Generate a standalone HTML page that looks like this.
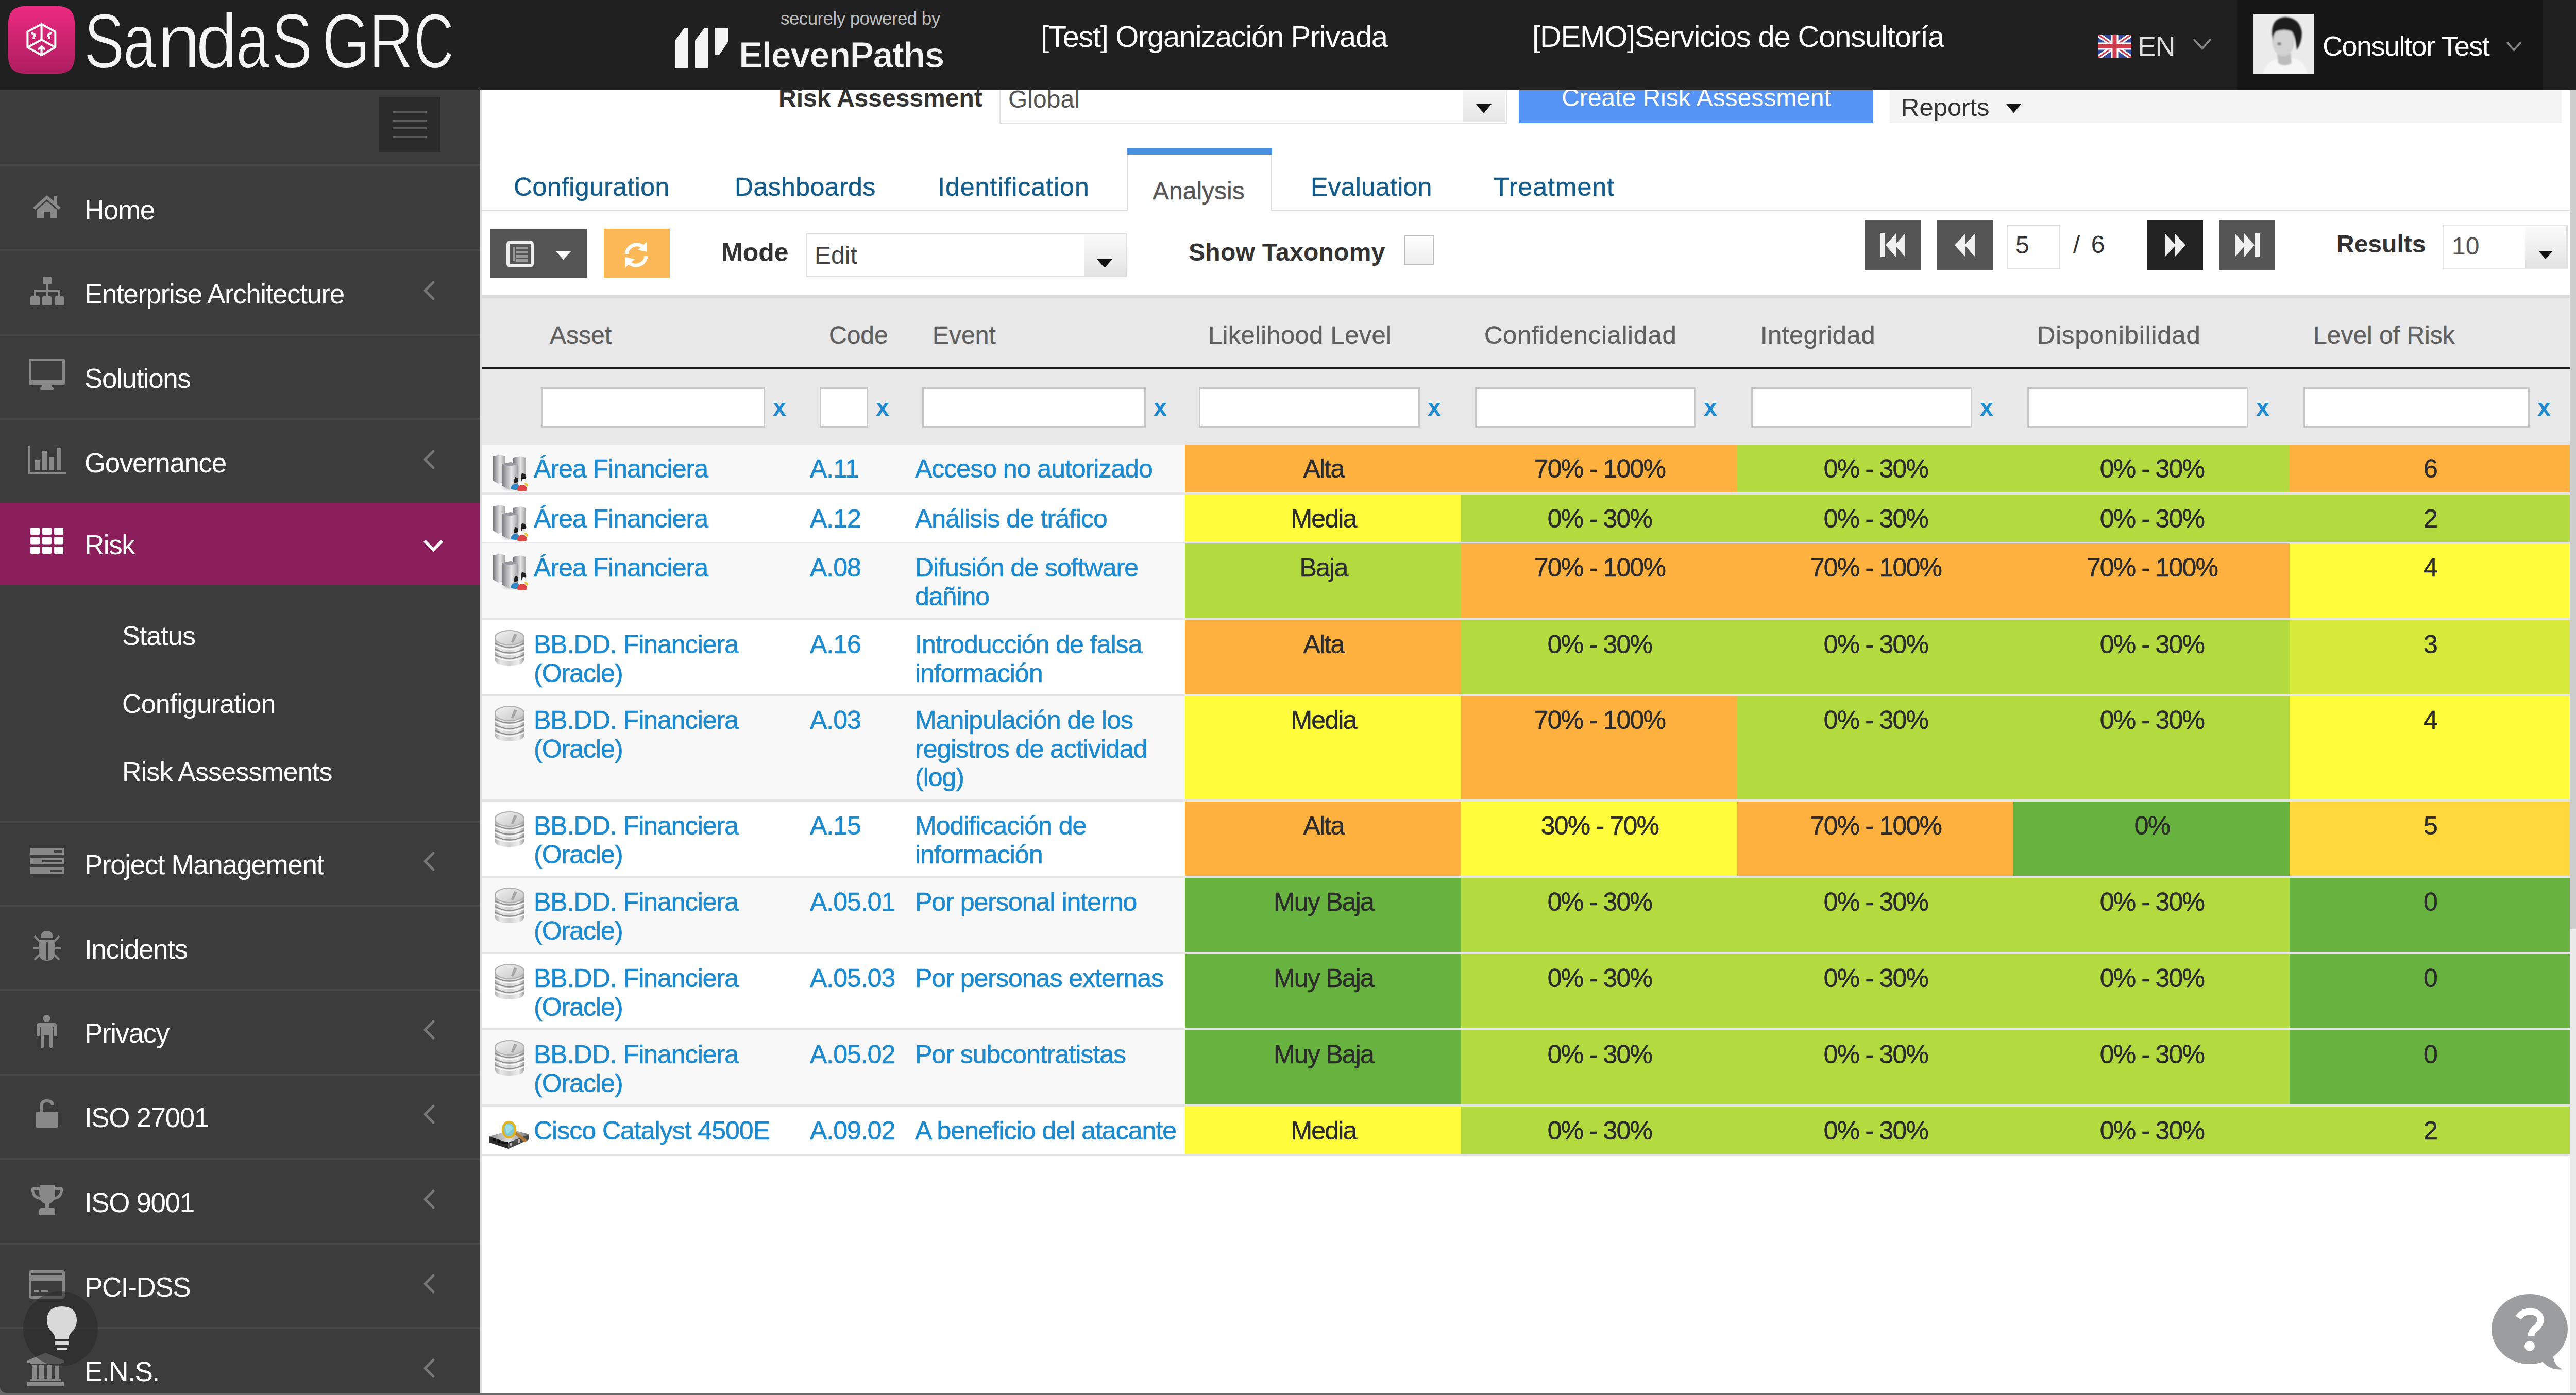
<!DOCTYPE html>
<html><head><meta charset="utf-8"><style>
html,body{margin:0;padding:0;}
body{width:5032px;height:2708px;overflow:hidden;position:relative;background:#6a6a6a;font-family:"Liberation Sans", sans-serif;}
#win{position:absolute;left:0;top:0;width:5032px;height:2704px;overflow:hidden;border-radius:0 0 12px 12px;}
.t{position:absolute;white-space:nowrap;font-family:"Liberation Sans", sans-serif;}
.r{position:absolute;display:block;}
</style></head><body><div id="win">
<div class="r" style="left:0px;top:175px;width:932px;height:2533px;background:#3c3c3c;"></div>
<div class="r" style="left:736px;top:188px;width:119px;height:107px;background:#2b2b2b;"></div>
<div class="r" style="left:763px;top:215.7px;width:65px;height:4.0px;background:#5a5a5a;"></div>
<div class="r" style="left:763px;top:231.7px;width:65px;height:4.0px;background:#5a5a5a;"></div>
<div class="r" style="left:763px;top:247.3px;width:65px;height:4.0px;background:#5a5a5a;"></div>
<div class="r" style="left:763px;top:263.7px;width:65px;height:4.0px;background:#5a5a5a;"></div>
<div class="r" style="left:0px;top:319px;width:932px;height:4px;background:#474747;"></div>
<div class="r" style="left:0px;top:483.5px;width:932px;height:4.0px;background:#474747;"></div>
<div class="r" style="left:0px;top:647.5px;width:932px;height:4.0px;background:#474747;"></div>
<div class="r" style="left:0px;top:811px;width:932px;height:4px;background:#474747;"></div>
<div class="r" style="left:0px;top:976px;width:932px;height:160px;background:#8a1f5b;"></div>
<div class="r" style="left:0px;top:1592.5px;width:932px;height:4.0px;background:#474747;"></div>
<div class="r" style="left:0px;top:1756px;width:932px;height:4px;background:#474747;"></div>
<div class="r" style="left:0px;top:1920px;width:932px;height:4px;background:#474747;"></div>
<div class="r" style="left:0px;top:2084px;width:932px;height:4px;background:#474747;"></div>
<div class="r" style="left:0px;top:2248px;width:932px;height:4px;background:#474747;"></div>
<div class="r" style="left:0px;top:2412px;width:932px;height:4px;background:#474747;"></div>
<div class="r" style="left:0px;top:2576px;width:932px;height:4px;background:#474747;"></div>
<div class="t" style="left:164px;top:380.64px;font-size:53px;line-height:53px;color:#ffffff;letter-spacing:-1.4px;">Home</div>
<div class="t" style="left:164px;top:544.14px;font-size:53px;line-height:53px;color:#ffffff;letter-spacing:-1.4px;">Enterprise Architecture</div>
<svg class="r" style="left:820px;top:544px;" width="26" height="40" viewBox="0 0 26 40"><path d="M21 4 L5 20 L21 36" fill="none" stroke="#777" stroke-width="5" stroke-linecap="round" stroke-linejoin="round"/></svg>
<div class="t" style="left:164px;top:708.14px;font-size:53px;line-height:53px;color:#ffffff;letter-spacing:-1.4px;">Solutions</div>
<div class="t" style="left:164px;top:872.14px;font-size:53px;line-height:53px;color:#ffffff;letter-spacing:-1.4px;">Governance</div>
<svg class="r" style="left:820px;top:872px;" width="26" height="40" viewBox="0 0 26 40"><path d="M21 4 L5 20 L21 36" fill="none" stroke="#777" stroke-width="5" stroke-linecap="round" stroke-linejoin="round"/></svg>
<div class="t" style="left:164px;top:1031.14px;font-size:53px;line-height:53px;color:#ffffff;letter-spacing:-1.4px;">Risk</div>
<svg class="r" style="left:821px;top:1047px;" width="40" height="25" viewBox="0 0 40 25"><path d="M3 3 L20 20 L37 3" fill="none" stroke="#fff" stroke-width="6"/></svg>
<div class="t" style="left:164px;top:1651.64px;font-size:53px;line-height:53px;color:#ffffff;letter-spacing:-1.4px;">Project Management</div>
<svg class="r" style="left:820px;top:1651.5px;" width="26" height="40" viewBox="0 0 26 40"><path d="M21 4 L5 20 L21 36" fill="none" stroke="#777" stroke-width="5" stroke-linecap="round" stroke-linejoin="round"/></svg>
<div class="t" style="left:164px;top:1815.64px;font-size:53px;line-height:53px;color:#ffffff;letter-spacing:-1.4px;">Incidents</div>
<div class="t" style="left:164px;top:1979.14px;font-size:53px;line-height:53px;color:#ffffff;letter-spacing:-1.4px;">Privacy</div>
<svg class="r" style="left:820px;top:1979px;" width="26" height="40" viewBox="0 0 26 40"><path d="M21 4 L5 20 L21 36" fill="none" stroke="#777" stroke-width="5" stroke-linecap="round" stroke-linejoin="round"/></svg>
<div class="t" style="left:164px;top:2143.14px;font-size:53px;line-height:53px;color:#ffffff;letter-spacing:-1.4px;">ISO 27001</div>
<svg class="r" style="left:820px;top:2143px;" width="26" height="40" viewBox="0 0 26 40"><path d="M21 4 L5 20 L21 36" fill="none" stroke="#777" stroke-width="5" stroke-linecap="round" stroke-linejoin="round"/></svg>
<div class="t" style="left:164px;top:2308.14px;font-size:53px;line-height:53px;color:#ffffff;letter-spacing:-1.4px;">ISO 9001</div>
<svg class="r" style="left:820px;top:2308px;" width="26" height="40" viewBox="0 0 26 40"><path d="M21 4 L5 20 L21 36" fill="none" stroke="#777" stroke-width="5" stroke-linecap="round" stroke-linejoin="round"/></svg>
<div class="t" style="left:164px;top:2472.14px;font-size:53px;line-height:53px;color:#ffffff;letter-spacing:-1.4px;">PCI-DSS</div>
<svg class="r" style="left:820px;top:2472px;" width="26" height="40" viewBox="0 0 26 40"><path d="M21 4 L5 20 L21 36" fill="none" stroke="#777" stroke-width="5" stroke-linecap="round" stroke-linejoin="round"/></svg>
<div class="t" style="left:164px;top:2636.14px;font-size:53px;line-height:53px;color:#ffffff;letter-spacing:-1.4px;">E.N.S.</div>
<svg class="r" style="left:820px;top:2636px;" width="26" height="40" viewBox="0 0 26 40"><path d="M21 4 L5 20 L21 36" fill="none" stroke="#777" stroke-width="5" stroke-linecap="round" stroke-linejoin="round"/></svg>
<svg class="r" style="left:62px;top:377px;" width="58" height="48" viewBox="0 0 58 48"><path d="M29 2 L2 26 L6 30 L29 10 L52 30 L56 26 L48 19 L48 4 L42 4 L42 13 Z" fill="#888888"/><path d="M10 30 L29 14 L48 30 L48 47 L35 47 L35 34 L23 34 L23 47 L10 47 Z" fill="#888888"/></svg>
<svg class="r" style="left:59px;top:537px;" width="65" height="56" viewBox="0 0 65 56"><g fill="#888888"><rect x="24" y="0" width="17" height="15" rx="2"/><rect x="0" y="38" width="18" height="18" rx="3"/><rect x="23" y="38" width="18" height="18" rx="3"/><rect x="47" y="38" width="18" height="18" rx="3"/><rect x="31" y="14" width="4" height="24"/><rect x="7" y="25" width="51" height="4"/><rect x="7" y="25" width="4" height="13"/><rect x="54" y="25" width="4" height="13"/></g></svg>
<svg class="r" style="left:56px;top:696px;" width="70" height="61" viewBox="0 0 70 61"><g fill="#888888"><path d="M4 0 H66 Q70 0 70 4 V48 Q70 52 66 52 H4 Q0 52 0 48 V4 Q0 0 4 0 Z M5 5 V42 H65 V5 Z" fill-rule="evenodd"/><rect x="26" y="52" width="18" height="5"/><rect x="22" y="56" width="26" height="5" rx="2"/></g></svg>
<svg class="r" style="left:54px;top:865px;" width="74" height="55" viewBox="0 0 74 55"><g fill="#888888"><rect x="0" y="0" width="4" height="55"/><rect x="0" y="51" width="74" height="4"/><rect x="14" y="28" width="9" height="20"/><rect x="28" y="10" width="9" height="38"/><rect x="42" y="22" width="9" height="26"/><rect x="56" y="4" width="9" height="44"/></g></svg>
<svg class="r" style="left:59px;top:1024px;" width="65" height="52" viewBox="0 0 65 52"><rect x="0" y="0.0" width="18" height="14" rx="2" fill="#fff"/><rect x="23" y="0.0" width="18" height="14" rx="2" fill="#fff"/><rect x="46" y="0.0" width="18" height="14" rx="2" fill="#fff"/><rect x="0" y="18.5" width="18" height="14" rx="2" fill="#fff"/><rect x="23" y="18.5" width="18" height="14" rx="2" fill="#fff"/><rect x="46" y="18.5" width="18" height="14" rx="2" fill="#fff"/><rect x="0" y="37.0" width="18" height="14" rx="2" fill="#fff"/><rect x="23" y="37.0" width="18" height="14" rx="2" fill="#fff"/><rect x="46" y="37.0" width="18" height="14" rx="2" fill="#fff"/></svg>
<svg class="r" style="left:59px;top:1646px;" width="65" height="51" viewBox="0 0 65 51"><g fill="#888888"><rect x="0" y="0" width="65" height="13"/><rect x="0" y="19" width="65" height="13"/><rect x="0" y="38" width="65" height="13"/></g><g fill="#3d3d3d"><rect x="46" y="4" width="15" height="5"/><rect x="23" y="23" width="38" height="5"/><rect x="38" y="42" width="23" height="5"/></g></svg>
<svg class="r" style="left:62px;top:1807px;" width="58" height="58" viewBox="0 0 58 58"><g fill="#888888"><path d="M17 14 Q17 0 29 0 Q41 0 41 14 Z"/><path d="M13 18 H45 V40 Q45 58 29 58 Q13 58 13 40 Z"/></g><rect x="27" y="22" width="4" height="34" fill="#3d3d3d"/><g stroke="#888888" stroke-width="4"><path d="M2 34 H13 M45 34 H56 M5 10 L14 20 M53 10 L44 20 M5 56 L15 46 M53 56 L43 46"/></g></svg>
<svg class="r" style="left:71px;top:1970px;" width="39" height="64" viewBox="0 0 39 64"><g fill="#888888"><circle cx="19.5" cy="7" r="7"/><path d="M5 16 H34 Q39 16 39 21 V40 Q39 42 36 42 Q33 42 33 40 V24 H31 V62 Q31 64 28 64 Q25 64 25 62 V40 H14 V62 Q14 64 11 64 Q8 64 8 62 V24 H6 V40 Q6 42 3 42 Q0 42 0 40 V21 Q0 16 5 16 Z"/></g></svg>
<svg class="r" style="left:69px;top:2132px;" width="44" height="57" viewBox="0 0 44 57"><g fill="#888888"><path d="M4 26 H40 Q44 26 44 30 V53 Q44 57 40 57 H4 Q0 57 0 53 V30 Q0 26 4 26 Z"/><path d="M8 26 V16 Q8 2 22 2 Q36 2 36 14 L30 14 Q30 8 22 8 Q14 8 14 16 V26 Z"/></g></svg>
<svg class="r" style="left:61px;top:2301px;" width="61" height="57" viewBox="0 0 61 57"><g fill="#888888"><path d="M16 0 H45 V4 H58 Q61 4 61 8 Q61 26 44 28 Q40 34 34 36 V44 H42 Q46 44 46 50 V57 H15 V50 Q15 44 19 44 H27 V36 Q21 34 17 28 Q0 26 0 8 Q0 4 3 4 H16 Z M5 9 Q6 20 16 23 Q15 16 15 9 Z M56 9 H46 Q46 16 45 23 Q55 20 56 9 Z" fill-rule="evenodd"/></g></svg>
<svg class="r" style="left:56px;top:2466px;" width="70" height="55" viewBox="0 0 70 55"><g fill="#888888"><path d="M5 0 H65 Q70 0 70 5 V50 Q70 55 65 55 H5 Q0 55 0 50 V5 Q0 0 5 0 Z M5 20 V49 Q5 50 6 50 H64 Q65 50 65 49 V20 Z M5 6 V10 H65 V6 Q65 5 64 5 H6 Q5 5 5 6 Z" fill-rule="evenodd"/><rect x="10" y="38" width="10" height="4"/><rect x="24" y="38" width="14" height="4"/></g></svg>
<svg class="r" style="left:53px;top:2626px;" width="71" height="65" viewBox="0 0 71 65"><g fill="#888888"><path d="M35.5 0 L71 15 V20 H0 V15 Z"/><rect x="5" y="20" width="61" height="2"/><rect x="9" y="24" width="9" height="26"/><rect x="23" y="24" width="9" height="26"/><rect x="39" y="24" width="9" height="26"/><rect x="53" y="24" width="9" height="26"/><rect x="5" y="50" width="61" height="5"/><rect x="0" y="57" width="71" height="8"/></g></svg>
<div class="t" style="left:237px;top:1207.98px;font-size:52px;line-height:52px;color:#ffffff;letter-spacing:-0.9px;">Status</div>
<div class="t" style="left:237px;top:1340.48px;font-size:52px;line-height:52px;color:#ffffff;letter-spacing:-0.9px;">Configuration</div>
<div class="t" style="left:237px;top:1471.98px;font-size:52px;line-height:52px;color:#ffffff;letter-spacing:-0.9px;">Risk Assessments</div>
<div class="r" style="left:45px;top:2507px;width:145px;height:145px;border-radius:50%;background:rgba(40,40,40,0.55);"></div>
<svg class="r" style="left:91px;top:2536px;" width="58" height="88" viewBox="0 0 58 88"><g fill="#d9d9d9"><path d="M29 0 Q58 0 58 28 Q58 40 48 50 Q42 56 42 64 H16 Q16 56 10 50 Q0 40 0 28 Q0 0 29 0 Z"/><rect x="15" y="68" width="28" height="7" rx="2"/><rect x="19" y="80" width="20" height="5" rx="2"/></g></svg>
<div class="r" style="left:932px;top:175px;width:4056px;height:2533px;background:#ffffff;"></div>
<div class="r" style="left:931px;top:175px;width:5px;height:2533px;background:#e0e0e0;"></div>
<div class="r" style="left:4988px;top:175px;width:44px;height:2533px;background:#eaeaea;"></div>
<div class="r" style="left:4988px;top:175px;width:44px;height:1629px;background:#cdcdcd;"></div>
<div class="t" style="left:1511px;top:166.87px;font-size:48px;line-height:48px;color:#333;font-weight:bold;">Risk Assessment</div>
<div class="r" style="left:1940px;top:160px;width:982px;height:76px;border:2px solid #e2e2e2;background:#fff;"></div>
<div class="r" style="left:2840px;top:162px;width:82px;height:74px;background:linear-gradient(#f8f8f8,#e6e6e6);"></div>
<div class="t" style="left:1957px;top:169.37px;font-size:48px;line-height:48px;color:#555;">Global</div>
<svg class="r" style="left:2865px;top:202px;" width="30" height="18" viewBox="0 0 30 18"><path d="M0 0 H30 L15 18 Z" fill="#111"/></svg>
<div class="r" style="left:2948px;top:175px;width:688px;height:64px;background:#5594f5;"></div>
<div class="t" style="left:3031px;top:166.37px;font-size:48px;line-height:48px;color:#ffffff;">Create Risk Assessment</div>
<div class="r" style="left:3668px;top:175px;width:1304px;height:64px;background:#f4f4f4;"></div>
<div class="t" style="left:3690px;top:184.02px;font-size:49px;line-height:49px;color:#333;">Reports</div>
<svg class="r" style="left:3894px;top:202px;" width="29" height="17" viewBox="0 0 29 17"><path d="M0 0 H29 L14.5 17 Z" fill="#111"/></svg>
<div class="r" style="left:932px;top:407px;width:4056px;height:3px;background:#dddddd;"></div>
<div class="r" style="left:2187px;top:288px;width:282px;height:122px;background:#fff;border-left:2px solid #ddd;border-right:2px solid #ddd;box-sizing:border-box;"></div>
<div class="r" style="left:2187px;top:288px;width:282px;height:12px;background:#4a90e2;"></div>
<div class="t" style="left:997px;top:337.68px;font-size:50px;line-height:50px;color:#125b8b;letter-spacing:0.4px;-webkit-text-stroke:0.5px #125b8b;">Configuration</div>
<div class="t" style="left:1426px;top:337.68px;font-size:50px;line-height:50px;color:#125b8b;letter-spacing:0.4px;-webkit-text-stroke:0.5px #125b8b;">Dashboards</div>
<div class="t" style="left:1820px;top:337.68px;font-size:50px;line-height:50px;color:#125b8b;letter-spacing:1px;-webkit-text-stroke:0.5px #125b8b;">Identification</div>
<div class="t" style="left:2237px;top:347.37px;font-size:48px;line-height:48px;color:#555;letter-spacing:0px;-webkit-text-stroke:0.4px #555;">Analysis</div>
<div class="t" style="left:2544px;top:337.68px;font-size:50px;line-height:50px;color:#125b8b;letter-spacing:0.2px;-webkit-text-stroke:0.5px #125b8b;">Evaluation</div>
<div class="t" style="left:2899px;top:337.68px;font-size:50px;line-height:50px;color:#125b8b;letter-spacing:1px;-webkit-text-stroke:0.5px #125b8b;">Treatment</div>
<div class="r" style="left:952px;top:444px;width:187px;height:95px;background:#555555;"></div>
<svg class="r" style="left:983px;top:467px;" width="53" height="52" viewBox="0 0 53 52"><rect x="3" y="3" width="47" height="46" rx="4" fill="none" stroke="#eee" stroke-width="6"/><g fill="#999"><rect x="12" y="12" width="4" height="28"/><rect x="19" y="12" width="22" height="5"/><rect x="19" y="20" width="22" height="5"/><rect x="19" y="28" width="22" height="5"/><rect x="19" y="36" width="22" height="5"/></g></svg>
<svg class="r" style="left:1079px;top:488px;" width="29" height="16" viewBox="0 0 29 16"><path d="M0 0 H29 L14.5 16 Z" fill="#fff"/></svg>
<div class="r" style="left:1172px;top:444px;width:128px;height:95px;background:#fcb857;"></div>
<svg class="r" style="left:1208px;top:467px;" width="54" height="54" viewBox="0 0 54 54"><g fill="none" stroke="#fff" stroke-width="7"><path d="M8 26 A20 20 0 0 1 44 16"/><path d="M46 30 A20 20 0 0 1 10 40"/></g><path d="M48 2 L48 22 L30 18 Z" fill="#fff"/><path d="M6 52 L6 32 L24 36 Z" fill="#fff"/></svg>
<div class="t" style="left:1400px;top:465.18px;font-size:50px;line-height:50px;color:#333;font-weight:bold;">Mode</div>
<div class="r" style="left:1565px;top:452px;width:622px;height:86px;border:2px solid #e0e0e0;box-sizing:border-box;background:#fff;"></div>
<div class="r" style="left:2104px;top:454px;width:81px;height:82px;background:linear-gradient(#fbfbfb,#e3e3e3);"></div>
<div class="t" style="left:1581px;top:471.87px;font-size:48px;line-height:48px;color:#444;">Edit</div>
<svg class="r" style="left:2129px;top:503px;" width="29" height="16" viewBox="0 0 29 16"><path d="M0 0 H30 L15 17 Z" fill="#111"/></svg>
<div class="t" style="left:2307px;top:465.87px;font-size:48px;line-height:48px;color:#333;font-weight:bold;letter-spacing:0.3px;">Show Taxonomy</div>
<div class="r" style="left:2725px;top:456px;width:59px;height:59px;border:3px solid #bbb;box-sizing:border-box;border-radius:3px;background:linear-gradient(#fff,#eee);"></div>
<div class="r" style="left:3620px;top:428px;width:108px;height:96px;background:#555555;"></div>
<svg class="r" style="left:3650px;top:453px;" width="48" height="46" viewBox="0 0 48 46"><g fill="#f0f0f0"><rect x="0" y="0" width="9" height="46"/><path d="M10 23 L30 0 V46 Z"/><path d="M28 23 L48 0 V46 Z"/></g></svg>
<div class="r" style="left:3760px;top:428px;width:108px;height:96px;background:#555555;"></div>
<svg class="r" style="left:3790px;top:453px;" width="48" height="46" viewBox="0 0 48 46"><g fill="#f0f0f0"><path d="M4 23 L25 0 V46 Z"/><path d="M23 23 L44 0 V46 Z"/></g></svg>
<div class="r" style="left:3896px;top:436px;width:103px;height:86px;border:2px solid #e0e0e0;box-sizing:border-box;background:#fff;"></div>
<div class="t" style="left:3912px;top:451.87px;font-size:48px;line-height:48px;color:#333;">5</div>
<div class="t" style="left:4024px;top:451.37px;font-size:48px;line-height:48px;color:#333;letter-spacing:4px;">/ 6</div>
<div class="r" style="left:4168px;top:428px;width:108px;height:96px;background:#222222;"></div>
<svg class="r" style="left:4198px;top:453px;" width="48" height="46" viewBox="0 0 48 46"><g fill="#f0f0f0"><path d="M4 0 L25 23 L4 46 Z"/><path d="M23 0 L44 23 L23 46 Z"/></g></svg>
<div class="r" style="left:4308px;top:428px;width:108px;height:96px;background:#555555;"></div>
<svg class="r" style="left:4338px;top:453px;" width="48" height="46" viewBox="0 0 48 46"><g fill="#f0f0f0"><path d="M0 0 L20 23 L0 46 Z"/><path d="M18 0 L38 23 L18 46 Z"/><rect x="39" y="0" width="9" height="46"/></g></svg>
<div class="t" style="left:4535px;top:450.37px;font-size:48px;line-height:48px;color:#333;font-weight:bold;">Results</div>
<div class="r" style="left:4741px;top:436px;width:243px;height:87px;border:3px solid #e0e0e0;box-sizing:border-box;background:#fff;"></div>
<div class="r" style="left:4901px;top:439px;width:80px;height:81px;background:linear-gradient(#fbfbfb,#e3e3e3);"></div>
<div class="t" style="left:4759px;top:454.37px;font-size:48px;line-height:48px;color:#555;">10</div>
<svg class="r" style="left:4927px;top:487px;" width="28" height="16" viewBox="0 0 28 16"><path d="M0 0 H28 L14 16 Z" fill="#111"/></svg>
<div class="r" style="left:936px;top:572px;width:4052px;height:291px;background:#e8e8e8;"></div>
<div class="r" style="left:936px;top:572px;width:4052px;height:7px;background:#dadada;"></div>
<div class="r" style="left:936px;top:713px;width:4052px;height:3px;background:#1a1a1a;"></div>
<div class="t" style="left:1067px;top:626.87px;font-size:48px;line-height:48px;color:#606060;letter-spacing:0px;-webkit-text-stroke:0.4px #606060;">Asset</div>
<div class="t" style="left:1609px;top:626.87px;font-size:48px;line-height:48px;color:#606060;-webkit-text-stroke:0.4px #606060;">Code</div>
<div class="t" style="left:1810px;top:626.87px;font-size:48px;line-height:48px;color:#606060;-webkit-text-stroke:0.4px #606060;">Event</div>
<div class="t" style="left:2345px;top:626.02px;font-size:49px;line-height:49px;color:#606060;letter-spacing:0.3px;-webkit-text-stroke:0.4px #606060;">Likelihood Level</div>
<div class="t" style="left:2881px;top:626.02px;font-size:49px;line-height:49px;color:#606060;letter-spacing:0.7px;-webkit-text-stroke:0.4px #606060;">Confidencialidad</div>
<div class="t" style="left:3417px;top:626.02px;font-size:49px;line-height:49px;color:#606060;letter-spacing:0.5px;-webkit-text-stroke:0.4px #606060;">Integridad</div>
<div class="t" style="left:3954px;top:626.02px;font-size:49px;line-height:49px;color:#606060;letter-spacing:0.9px;-webkit-text-stroke:0.4px #606060;">Disponibilidad</div>
<div class="t" style="left:4490px;top:626.87px;font-size:48px;line-height:48px;color:#606060;-webkit-text-stroke:0.4px #606060;">Level of Risk</div>
<div class="r" style="left:1051px;top:752px;width:434px;height:78px;border:3px solid #c9c9c9;box-sizing:border-box;background:#fff;"></div>
<div class="t" style="left:1500px;top:768.06px;font-size:46px;line-height:46px;color:#1b8ad0;font-weight:bold;">x</div>
<div class="r" style="left:1591px;top:752px;width:94px;height:78px;border:3px solid #c9c9c9;box-sizing:border-box;background:#fff;"></div>
<div class="t" style="left:1700px;top:768.06px;font-size:46px;line-height:46px;color:#1b8ad0;font-weight:bold;">x</div>
<div class="r" style="left:1790px;top:752px;width:434px;height:78px;border:3px solid #c9c9c9;box-sizing:border-box;background:#fff;"></div>
<div class="t" style="left:2239px;top:768.06px;font-size:46px;line-height:46px;color:#1b8ad0;font-weight:bold;">x</div>
<div class="r" style="left:2327px;top:752px;width:429px;height:78px;border:3px solid #c9c9c9;box-sizing:border-box;background:#fff;"></div>
<div class="t" style="left:2771px;top:768.06px;font-size:46px;line-height:46px;color:#1b8ad0;font-weight:bold;">x</div>
<div class="r" style="left:2863px;top:752px;width:429px;height:78px;border:3px solid #c9c9c9;box-sizing:border-box;background:#fff;"></div>
<div class="t" style="left:3307px;top:768.06px;font-size:46px;line-height:46px;color:#1b8ad0;font-weight:bold;">x</div>
<div class="r" style="left:3399px;top:752px;width:429px;height:78px;border:3px solid #c9c9c9;box-sizing:border-box;background:#fff;"></div>
<div class="t" style="left:3843px;top:768.06px;font-size:46px;line-height:46px;color:#1b8ad0;font-weight:bold;">x</div>
<div class="r" style="left:3935px;top:752px;width:429px;height:78px;border:3px solid #c9c9c9;box-sizing:border-box;background:#fff;"></div>
<div class="t" style="left:4379px;top:768.06px;font-size:46px;line-height:46px;color:#1b8ad0;font-weight:bold;">x</div>
<div class="r" style="left:4471px;top:752px;width:439px;height:78px;border:3px solid #c9c9c9;box-sizing:border-box;background:#fff;"></div>
<div class="t" style="left:4925px;top:768.06px;font-size:46px;line-height:46px;color:#1b8ad0;font-weight:bold;">x</div>
<div class="r" style="left:936px;top:863px;width:1364px;height:93px;background:#f8f8f8;"></div>
<div class="r" style="left:2300px;top:863px;width:536px;height:93px;background:#ffb13f;"></div>
<div class="r" style="left:2836px;top:863px;width:536px;height:93px;background:#ffb13f;"></div>
<div class="r" style="left:3372px;top:863px;width:536px;height:93px;background:#b3da3e;"></div>
<div class="r" style="left:3908px;top:863px;width:536px;height:93px;background:#b3da3e;"></div>
<div class="r" style="left:4444px;top:863px;width:544px;height:93px;background:#ffb13f;"></div>
<div class="r" style="left:936px;top:956px;width:4052px;height:4px;background:#e5e5e8;"></div>
<svg class="r" style="left:953px;top:883px;" width="73" height="71" viewBox="0 0 73 71"><defs><linearGradient id="gb" x1="0" x2="1"><stop offset="0" stop-color="#77777f"/><stop offset="0.35" stop-color="#b9b9bd"/><stop offset="0.6" stop-color="#e6e6e6"/><stop offset="1" stop-color="#a6a6aa"/></linearGradient>
<radialGradient id="gsh"><stop offset="0" stop-color="#000" stop-opacity="0.25"/><stop offset="1" stop-color="#000" stop-opacity="0"/></radialGradient></defs>
<ellipse cx="22" cy="48" rx="18" ry="7" fill="url(#gsh)"/>
<path d="M4 3 L18 0 L27 3 L27 52 L14 56 L4 50 Z" fill="url(#gb)"/>
<path d="M43 6 L58 3 L67 6 L67 46 L54 50 L43 45 Z" fill="url(#gb)"/>
<ellipse cx="38" cy="64" rx="20" ry="7" fill="url(#gsh)"/>
<path d="M21 18 L38 14 L52 18 L52 62 L36 67 L21 60 Z" fill="url(#gb)"/>
<path d="M21 18 L38 14 L52 18 L36 22 Z" fill="#9a9aa2"/>
<path d="M60 36 Q70 36 68 46 L60 52 Q56 44 60 36 Z" fill="#1e1e1e"/><circle cx="64" cy="50" r="4" fill="#f0f0f0"/>
<path d="M47 43 Q55 44 52 52 L46 56 Q43 50 47 43 Z" fill="#1e1e1e"/>
<path d="M38 66 Q40 56 48 56 Q56 57 56 66 Q48 70 38 66 Z" fill="#2f86c6"/>
<path d="M50 69 Q52 58 61 58 Q70 59 70 69 Q60 73 50 69 Z" fill="#e04848"/>
<path d="M64 54 Q70 53 72 60 L70 62 Q66 58 64 54 Z" fill="#f2c21c"/></svg>
<div class="t" style="left:1036px;top:885.17px;font-size:50px;line-height:50px;color:#1b8ad0;letter-spacing:-1px;-webkit-text-stroke:0.6px #1b8ad0;">Área Financiera</div>
<div class="t" style="left:1572px;top:885.17px;font-size:50px;line-height:50px;color:#1b8ad0;letter-spacing:-1px;-webkit-text-stroke:0.6px #1b8ad0;">A.11</div>
<div class="t" style="left:1776px;top:885.17px;font-size:50px;line-height:50px;color:#1b8ad0;letter-spacing:-1px;-webkit-text-stroke:0.6px #1b8ad0;">Acceso no autorizado</div>
<div class="t" style="left:2319.0px;width:500px;text-align:center;top:885.17px;font-size:50px;line-height:50px;color:#2b2b2b;letter-spacing:-1.8px;-webkit-text-stroke:0.5px #2b2b2b;">Alta</div>
<div class="t" style="left:2855.0px;width:500px;text-align:center;top:885.17px;font-size:50px;line-height:50px;color:#2b2b2b;letter-spacing:-1.8px;-webkit-text-stroke:0.5px #2b2b2b;">70% - 100%</div>
<div class="t" style="left:3391.0px;width:500px;text-align:center;top:885.17px;font-size:50px;line-height:50px;color:#2b2b2b;letter-spacing:-1.8px;-webkit-text-stroke:0.5px #2b2b2b;">0% - 30%</div>
<div class="t" style="left:3927.0px;width:500px;text-align:center;top:885.17px;font-size:50px;line-height:50px;color:#2b2b2b;letter-spacing:-1.8px;-webkit-text-stroke:0.5px #2b2b2b;">0% - 30%</div>
<div class="t" style="left:4467.0px;width:500px;text-align:center;top:885.17px;font-size:50px;line-height:50px;color:#2b2b2b;letter-spacing:-1.8px;-webkit-text-stroke:0.5px #2b2b2b;">6</div>
<div class="r" style="left:936px;top:960px;width:1364px;height:92px;background:#ffffff;"></div>
<div class="r" style="left:2300px;top:960px;width:536px;height:92px;background:#fffc3c;"></div>
<div class="r" style="left:2836px;top:960px;width:536px;height:92px;background:#b3da3e;"></div>
<div class="r" style="left:3372px;top:960px;width:536px;height:92px;background:#b3da3e;"></div>
<div class="r" style="left:3908px;top:960px;width:536px;height:92px;background:#b3da3e;"></div>
<div class="r" style="left:4444px;top:960px;width:544px;height:92px;background:#b3da3e;"></div>
<div class="r" style="left:936px;top:1052px;width:4052px;height:4px;background:#e5e5e8;"></div>
<svg class="r" style="left:953px;top:980px;" width="73" height="71" viewBox="0 0 73 71"><defs><linearGradient id="gb" x1="0" x2="1"><stop offset="0" stop-color="#77777f"/><stop offset="0.35" stop-color="#b9b9bd"/><stop offset="0.6" stop-color="#e6e6e6"/><stop offset="1" stop-color="#a6a6aa"/></linearGradient>
<radialGradient id="gsh"><stop offset="0" stop-color="#000" stop-opacity="0.25"/><stop offset="1" stop-color="#000" stop-opacity="0"/></radialGradient></defs>
<ellipse cx="22" cy="48" rx="18" ry="7" fill="url(#gsh)"/>
<path d="M4 3 L18 0 L27 3 L27 52 L14 56 L4 50 Z" fill="url(#gb)"/>
<path d="M43 6 L58 3 L67 6 L67 46 L54 50 L43 45 Z" fill="url(#gb)"/>
<ellipse cx="38" cy="64" rx="20" ry="7" fill="url(#gsh)"/>
<path d="M21 18 L38 14 L52 18 L52 62 L36 67 L21 60 Z" fill="url(#gb)"/>
<path d="M21 18 L38 14 L52 18 L36 22 Z" fill="#9a9aa2"/>
<path d="M60 36 Q70 36 68 46 L60 52 Q56 44 60 36 Z" fill="#1e1e1e"/><circle cx="64" cy="50" r="4" fill="#f0f0f0"/>
<path d="M47 43 Q55 44 52 52 L46 56 Q43 50 47 43 Z" fill="#1e1e1e"/>
<path d="M38 66 Q40 56 48 56 Q56 57 56 66 Q48 70 38 66 Z" fill="#2f86c6"/>
<path d="M50 69 Q52 58 61 58 Q70 59 70 69 Q60 73 50 69 Z" fill="#e04848"/>
<path d="M64 54 Q70 53 72 60 L70 62 Q66 58 64 54 Z" fill="#f2c21c"/></svg>
<div class="t" style="left:1036px;top:982.17px;font-size:50px;line-height:50px;color:#1b8ad0;letter-spacing:-1px;-webkit-text-stroke:0.6px #1b8ad0;">Área Financiera</div>
<div class="t" style="left:1572px;top:982.17px;font-size:50px;line-height:50px;color:#1b8ad0;letter-spacing:-1px;-webkit-text-stroke:0.6px #1b8ad0;">A.12</div>
<div class="t" style="left:1776px;top:982.17px;font-size:50px;line-height:50px;color:#1b8ad0;letter-spacing:-1px;-webkit-text-stroke:0.6px #1b8ad0;">Análisis de tráfico</div>
<div class="t" style="left:2319.0px;width:500px;text-align:center;top:982.17px;font-size:50px;line-height:50px;color:#2b2b2b;letter-spacing:-1.8px;-webkit-text-stroke:0.5px #2b2b2b;">Media</div>
<div class="t" style="left:2855.0px;width:500px;text-align:center;top:982.17px;font-size:50px;line-height:50px;color:#2b2b2b;letter-spacing:-1.8px;-webkit-text-stroke:0.5px #2b2b2b;">0% - 30%</div>
<div class="t" style="left:3391.0px;width:500px;text-align:center;top:982.17px;font-size:50px;line-height:50px;color:#2b2b2b;letter-spacing:-1.8px;-webkit-text-stroke:0.5px #2b2b2b;">0% - 30%</div>
<div class="t" style="left:3927.0px;width:500px;text-align:center;top:982.17px;font-size:50px;line-height:50px;color:#2b2b2b;letter-spacing:-1.8px;-webkit-text-stroke:0.5px #2b2b2b;">0% - 30%</div>
<div class="t" style="left:4467.0px;width:500px;text-align:center;top:982.17px;font-size:50px;line-height:50px;color:#2b2b2b;letter-spacing:-1.8px;-webkit-text-stroke:0.5px #2b2b2b;">2</div>
<div class="r" style="left:936px;top:1055px;width:1364px;height:145px;background:#f8f8f8;"></div>
<div class="r" style="left:2300px;top:1055px;width:536px;height:145px;background:#b3da3e;"></div>
<div class="r" style="left:2836px;top:1055px;width:536px;height:145px;background:#ffb13f;"></div>
<div class="r" style="left:3372px;top:1055px;width:536px;height:145px;background:#ffb13f;"></div>
<div class="r" style="left:3908px;top:1055px;width:536px;height:145px;background:#ffb13f;"></div>
<div class="r" style="left:4444px;top:1055px;width:544px;height:145px;background:#fffc3c;"></div>
<div class="r" style="left:936px;top:1200px;width:4052px;height:4px;background:#e5e5e8;"></div>
<svg class="r" style="left:953px;top:1075px;" width="73" height="71" viewBox="0 0 73 71"><defs><linearGradient id="gb" x1="0" x2="1"><stop offset="0" stop-color="#77777f"/><stop offset="0.35" stop-color="#b9b9bd"/><stop offset="0.6" stop-color="#e6e6e6"/><stop offset="1" stop-color="#a6a6aa"/></linearGradient>
<radialGradient id="gsh"><stop offset="0" stop-color="#000" stop-opacity="0.25"/><stop offset="1" stop-color="#000" stop-opacity="0"/></radialGradient></defs>
<ellipse cx="22" cy="48" rx="18" ry="7" fill="url(#gsh)"/>
<path d="M4 3 L18 0 L27 3 L27 52 L14 56 L4 50 Z" fill="url(#gb)"/>
<path d="M43 6 L58 3 L67 6 L67 46 L54 50 L43 45 Z" fill="url(#gb)"/>
<ellipse cx="38" cy="64" rx="20" ry="7" fill="url(#gsh)"/>
<path d="M21 18 L38 14 L52 18 L52 62 L36 67 L21 60 Z" fill="url(#gb)"/>
<path d="M21 18 L38 14 L52 18 L36 22 Z" fill="#9a9aa2"/>
<path d="M60 36 Q70 36 68 46 L60 52 Q56 44 60 36 Z" fill="#1e1e1e"/><circle cx="64" cy="50" r="4" fill="#f0f0f0"/>
<path d="M47 43 Q55 44 52 52 L46 56 Q43 50 47 43 Z" fill="#1e1e1e"/>
<path d="M38 66 Q40 56 48 56 Q56 57 56 66 Q48 70 38 66 Z" fill="#2f86c6"/>
<path d="M50 69 Q52 58 61 58 Q70 59 70 69 Q60 73 50 69 Z" fill="#e04848"/>
<path d="M64 54 Q70 53 72 60 L70 62 Q66 58 64 54 Z" fill="#f2c21c"/></svg>
<div class="t" style="left:1036px;top:1077.17px;font-size:50px;line-height:50px;color:#1b8ad0;letter-spacing:-1px;-webkit-text-stroke:0.6px #1b8ad0;">Área Financiera</div>
<div class="t" style="left:1572px;top:1077.17px;font-size:50px;line-height:50px;color:#1b8ad0;letter-spacing:-1px;-webkit-text-stroke:0.6px #1b8ad0;">A.08</div>
<div class="t" style="left:1776px;top:1077.17px;font-size:50px;line-height:50px;color:#1b8ad0;letter-spacing:-1px;-webkit-text-stroke:0.6px #1b8ad0;">Difusión de software</div>
<div class="t" style="left:1776px;top:1132.67px;font-size:50px;line-height:50px;color:#1b8ad0;letter-spacing:-1px;-webkit-text-stroke:0.6px #1b8ad0;">dañino</div>
<div class="t" style="left:2319.0px;width:500px;text-align:center;top:1077.17px;font-size:50px;line-height:50px;color:#2b2b2b;letter-spacing:-1.8px;-webkit-text-stroke:0.5px #2b2b2b;">Baja</div>
<div class="t" style="left:2855.0px;width:500px;text-align:center;top:1077.17px;font-size:50px;line-height:50px;color:#2b2b2b;letter-spacing:-1.8px;-webkit-text-stroke:0.5px #2b2b2b;">70% - 100%</div>
<div class="t" style="left:3391.0px;width:500px;text-align:center;top:1077.17px;font-size:50px;line-height:50px;color:#2b2b2b;letter-spacing:-1.8px;-webkit-text-stroke:0.5px #2b2b2b;">70% - 100%</div>
<div class="t" style="left:3927.0px;width:500px;text-align:center;top:1077.17px;font-size:50px;line-height:50px;color:#2b2b2b;letter-spacing:-1.8px;-webkit-text-stroke:0.5px #2b2b2b;">70% - 100%</div>
<div class="t" style="left:4467.0px;width:500px;text-align:center;top:1077.17px;font-size:50px;line-height:50px;color:#2b2b2b;letter-spacing:-1.8px;-webkit-text-stroke:0.5px #2b2b2b;">4</div>
<div class="r" style="left:936px;top:1204px;width:1364px;height:143px;background:#ffffff;"></div>
<div class="r" style="left:2300px;top:1204px;width:536px;height:143px;background:#ffb13f;"></div>
<div class="r" style="left:2836px;top:1204px;width:536px;height:143px;background:#b3da3e;"></div>
<div class="r" style="left:3372px;top:1204px;width:536px;height:143px;background:#b3da3e;"></div>
<div class="r" style="left:3908px;top:1204px;width:536px;height:143px;background:#b3da3e;"></div>
<div class="r" style="left:4444px;top:1204px;width:544px;height:143px;background:#d7ea3c;"></div>
<div class="r" style="left:936px;top:1347px;width:4052px;height:4px;background:#e5e5e8;"></div>
<svg class="r" style="left:958px;top:1222px;" width="62" height="71" viewBox="0 0 62 71"><defs><linearGradient id="gd" x1="0" x2="1"><stop offset="0" stop-color="#a8a8a8"/><stop offset="0.2" stop-color="#e8e8e8"/><stop offset="0.5" stop-color="#d0d0d0"/><stop offset="0.8" stop-color="#efefef"/><stop offset="1" stop-color="#9a9a9a"/></linearGradient>
<linearGradient id="gt" x1="0" y1="0" x2="1" y2="1"><stop offset="0" stop-color="#f2f2f2"/><stop offset="0.6" stop-color="#d8d8d8"/><stop offset="1" stop-color="#bdbdbd"/></linearGradient></defs>
<path d="M2 16 Q2 2 31 2 Q60 2 60 16 V56 Q60 70 31 70 Q2 70 2 56 Z" fill="url(#gd)"/>
<g fill="none" stroke="#7d7d7d" stroke-width="2.5" opacity="0.8"><path d="M3 27 Q31 42 59 27"/><path d="M3 38 Q31 53 59 38"/><path d="M3 49 Q31 64 59 49"/></g>
<g fill="none" stroke="#fafafa" stroke-width="2"><path d="M3 31 Q31 45 59 31"/><path d="M3 42 Q31 56 59 42"/><path d="M3 53 Q31 67 59 53"/></g>
<ellipse cx="31" cy="16" rx="28" ry="14" fill="url(#gt)" stroke="#b0b0b0" stroke-width="2"/>
<path d="M40 8 L46 10 L38 26 L34 24 Z" fill="#8e8e8e" opacity="0.7"/></svg>
<div class="t" style="left:1036px;top:1226.17px;font-size:50px;line-height:50px;color:#1b8ad0;letter-spacing:-1px;-webkit-text-stroke:0.6px #1b8ad0;">BB.DD. Financiera</div>
<div class="t" style="left:1036px;top:1281.67px;font-size:50px;line-height:50px;color:#1b8ad0;letter-spacing:-1px;-webkit-text-stroke:0.6px #1b8ad0;">(Oracle)</div>
<div class="t" style="left:1572px;top:1226.17px;font-size:50px;line-height:50px;color:#1b8ad0;letter-spacing:-1px;-webkit-text-stroke:0.6px #1b8ad0;">A.16</div>
<div class="t" style="left:1776px;top:1226.17px;font-size:50px;line-height:50px;color:#1b8ad0;letter-spacing:-1px;-webkit-text-stroke:0.6px #1b8ad0;">Introducción de falsa</div>
<div class="t" style="left:1776px;top:1281.67px;font-size:50px;line-height:50px;color:#1b8ad0;letter-spacing:-1px;-webkit-text-stroke:0.6px #1b8ad0;">información</div>
<div class="t" style="left:2319.0px;width:500px;text-align:center;top:1226.17px;font-size:50px;line-height:50px;color:#2b2b2b;letter-spacing:-1.8px;-webkit-text-stroke:0.5px #2b2b2b;">Alta</div>
<div class="t" style="left:2855.0px;width:500px;text-align:center;top:1226.17px;font-size:50px;line-height:50px;color:#2b2b2b;letter-spacing:-1.8px;-webkit-text-stroke:0.5px #2b2b2b;">0% - 30%</div>
<div class="t" style="left:3391.0px;width:500px;text-align:center;top:1226.17px;font-size:50px;line-height:50px;color:#2b2b2b;letter-spacing:-1.8px;-webkit-text-stroke:0.5px #2b2b2b;">0% - 30%</div>
<div class="t" style="left:3927.0px;width:500px;text-align:center;top:1226.17px;font-size:50px;line-height:50px;color:#2b2b2b;letter-spacing:-1.8px;-webkit-text-stroke:0.5px #2b2b2b;">0% - 30%</div>
<div class="t" style="left:4467.0px;width:500px;text-align:center;top:1226.17px;font-size:50px;line-height:50px;color:#2b2b2b;letter-spacing:-1.8px;-webkit-text-stroke:0.5px #2b2b2b;">3</div>
<div class="r" style="left:936px;top:1351px;width:1364px;height:201px;background:#f8f8f8;"></div>
<div class="r" style="left:2300px;top:1351px;width:536px;height:201px;background:#fffc3c;"></div>
<div class="r" style="left:2836px;top:1351px;width:536px;height:201px;background:#ffb13f;"></div>
<div class="r" style="left:3372px;top:1351px;width:536px;height:201px;background:#b3da3e;"></div>
<div class="r" style="left:3908px;top:1351px;width:536px;height:201px;background:#b3da3e;"></div>
<div class="r" style="left:4444px;top:1351px;width:544px;height:201px;background:#fffc3c;"></div>
<div class="r" style="left:936px;top:1552px;width:4052px;height:4px;background:#e5e5e8;"></div>
<svg class="r" style="left:958px;top:1369px;" width="62" height="71" viewBox="0 0 62 71"><defs><linearGradient id="gd" x1="0" x2="1"><stop offset="0" stop-color="#a8a8a8"/><stop offset="0.2" stop-color="#e8e8e8"/><stop offset="0.5" stop-color="#d0d0d0"/><stop offset="0.8" stop-color="#efefef"/><stop offset="1" stop-color="#9a9a9a"/></linearGradient>
<linearGradient id="gt" x1="0" y1="0" x2="1" y2="1"><stop offset="0" stop-color="#f2f2f2"/><stop offset="0.6" stop-color="#d8d8d8"/><stop offset="1" stop-color="#bdbdbd"/></linearGradient></defs>
<path d="M2 16 Q2 2 31 2 Q60 2 60 16 V56 Q60 70 31 70 Q2 70 2 56 Z" fill="url(#gd)"/>
<g fill="none" stroke="#7d7d7d" stroke-width="2.5" opacity="0.8"><path d="M3 27 Q31 42 59 27"/><path d="M3 38 Q31 53 59 38"/><path d="M3 49 Q31 64 59 49"/></g>
<g fill="none" stroke="#fafafa" stroke-width="2"><path d="M3 31 Q31 45 59 31"/><path d="M3 42 Q31 56 59 42"/><path d="M3 53 Q31 67 59 53"/></g>
<ellipse cx="31" cy="16" rx="28" ry="14" fill="url(#gt)" stroke="#b0b0b0" stroke-width="2"/>
<path d="M40 8 L46 10 L38 26 L34 24 Z" fill="#8e8e8e" opacity="0.7"/></svg>
<div class="t" style="left:1036px;top:1373.17px;font-size:50px;line-height:50px;color:#1b8ad0;letter-spacing:-1px;-webkit-text-stroke:0.6px #1b8ad0;">BB.DD. Financiera</div>
<div class="t" style="left:1036px;top:1428.67px;font-size:50px;line-height:50px;color:#1b8ad0;letter-spacing:-1px;-webkit-text-stroke:0.6px #1b8ad0;">(Oracle)</div>
<div class="t" style="left:1572px;top:1373.17px;font-size:50px;line-height:50px;color:#1b8ad0;letter-spacing:-1px;-webkit-text-stroke:0.6px #1b8ad0;">A.03</div>
<div class="t" style="left:1776px;top:1373.17px;font-size:50px;line-height:50px;color:#1b8ad0;letter-spacing:-1px;-webkit-text-stroke:0.6px #1b8ad0;">Manipulación de los</div>
<div class="t" style="left:1776px;top:1428.67px;font-size:50px;line-height:50px;color:#1b8ad0;letter-spacing:-1px;-webkit-text-stroke:0.6px #1b8ad0;">registros de actividad</div>
<div class="t" style="left:1776px;top:1484.17px;font-size:50px;line-height:50px;color:#1b8ad0;letter-spacing:-1px;-webkit-text-stroke:0.6px #1b8ad0;">(log)</div>
<div class="t" style="left:2319.0px;width:500px;text-align:center;top:1373.17px;font-size:50px;line-height:50px;color:#2b2b2b;letter-spacing:-1.8px;-webkit-text-stroke:0.5px #2b2b2b;">Media</div>
<div class="t" style="left:2855.0px;width:500px;text-align:center;top:1373.17px;font-size:50px;line-height:50px;color:#2b2b2b;letter-spacing:-1.8px;-webkit-text-stroke:0.5px #2b2b2b;">70% - 100%</div>
<div class="t" style="left:3391.0px;width:500px;text-align:center;top:1373.17px;font-size:50px;line-height:50px;color:#2b2b2b;letter-spacing:-1.8px;-webkit-text-stroke:0.5px #2b2b2b;">0% - 30%</div>
<div class="t" style="left:3927.0px;width:500px;text-align:center;top:1373.17px;font-size:50px;line-height:50px;color:#2b2b2b;letter-spacing:-1.8px;-webkit-text-stroke:0.5px #2b2b2b;">0% - 30%</div>
<div class="t" style="left:4467.0px;width:500px;text-align:center;top:1373.17px;font-size:50px;line-height:50px;color:#2b2b2b;letter-spacing:-1.8px;-webkit-text-stroke:0.5px #2b2b2b;">4</div>
<div class="r" style="left:936px;top:1556px;width:1364px;height:144px;background:#ffffff;"></div>
<div class="r" style="left:2300px;top:1556px;width:536px;height:144px;background:#ffb13f;"></div>
<div class="r" style="left:2836px;top:1556px;width:536px;height:144px;background:#fffc3c;"></div>
<div class="r" style="left:3372px;top:1556px;width:536px;height:144px;background:#ffb13f;"></div>
<div class="r" style="left:3908px;top:1556px;width:536px;height:144px;background:#68b240;"></div>
<div class="r" style="left:4444px;top:1556px;width:544px;height:144px;background:#ffd83e;"></div>
<div class="r" style="left:936px;top:1700px;width:4052px;height:4px;background:#e5e5e8;"></div>
<svg class="r" style="left:958px;top:1574px;" width="62" height="71" viewBox="0 0 62 71"><defs><linearGradient id="gd" x1="0" x2="1"><stop offset="0" stop-color="#a8a8a8"/><stop offset="0.2" stop-color="#e8e8e8"/><stop offset="0.5" stop-color="#d0d0d0"/><stop offset="0.8" stop-color="#efefef"/><stop offset="1" stop-color="#9a9a9a"/></linearGradient>
<linearGradient id="gt" x1="0" y1="0" x2="1" y2="1"><stop offset="0" stop-color="#f2f2f2"/><stop offset="0.6" stop-color="#d8d8d8"/><stop offset="1" stop-color="#bdbdbd"/></linearGradient></defs>
<path d="M2 16 Q2 2 31 2 Q60 2 60 16 V56 Q60 70 31 70 Q2 70 2 56 Z" fill="url(#gd)"/>
<g fill="none" stroke="#7d7d7d" stroke-width="2.5" opacity="0.8"><path d="M3 27 Q31 42 59 27"/><path d="M3 38 Q31 53 59 38"/><path d="M3 49 Q31 64 59 49"/></g>
<g fill="none" stroke="#fafafa" stroke-width="2"><path d="M3 31 Q31 45 59 31"/><path d="M3 42 Q31 56 59 42"/><path d="M3 53 Q31 67 59 53"/></g>
<ellipse cx="31" cy="16" rx="28" ry="14" fill="url(#gt)" stroke="#b0b0b0" stroke-width="2"/>
<path d="M40 8 L46 10 L38 26 L34 24 Z" fill="#8e8e8e" opacity="0.7"/></svg>
<div class="t" style="left:1036px;top:1578.17px;font-size:50px;line-height:50px;color:#1b8ad0;letter-spacing:-1px;-webkit-text-stroke:0.6px #1b8ad0;">BB.DD. Financiera</div>
<div class="t" style="left:1036px;top:1633.67px;font-size:50px;line-height:50px;color:#1b8ad0;letter-spacing:-1px;-webkit-text-stroke:0.6px #1b8ad0;">(Oracle)</div>
<div class="t" style="left:1572px;top:1578.17px;font-size:50px;line-height:50px;color:#1b8ad0;letter-spacing:-1px;-webkit-text-stroke:0.6px #1b8ad0;">A.15</div>
<div class="t" style="left:1776px;top:1578.17px;font-size:50px;line-height:50px;color:#1b8ad0;letter-spacing:-1px;-webkit-text-stroke:0.6px #1b8ad0;">Modificación de</div>
<div class="t" style="left:1776px;top:1633.67px;font-size:50px;line-height:50px;color:#1b8ad0;letter-spacing:-1px;-webkit-text-stroke:0.6px #1b8ad0;">información</div>
<div class="t" style="left:2319.0px;width:500px;text-align:center;top:1578.17px;font-size:50px;line-height:50px;color:#2b2b2b;letter-spacing:-1.8px;-webkit-text-stroke:0.5px #2b2b2b;">Alta</div>
<div class="t" style="left:2855.0px;width:500px;text-align:center;top:1578.17px;font-size:50px;line-height:50px;color:#2b2b2b;letter-spacing:-1.8px;-webkit-text-stroke:0.5px #2b2b2b;">30% - 70%</div>
<div class="t" style="left:3391.0px;width:500px;text-align:center;top:1578.17px;font-size:50px;line-height:50px;color:#2b2b2b;letter-spacing:-1.8px;-webkit-text-stroke:0.5px #2b2b2b;">70% - 100%</div>
<div class="t" style="left:3927.0px;width:500px;text-align:center;top:1578.17px;font-size:50px;line-height:50px;color:#2b2b2b;letter-spacing:-1.8px;-webkit-text-stroke:0.5px #2b2b2b;">0%</div>
<div class="t" style="left:4467.0px;width:500px;text-align:center;top:1578.17px;font-size:50px;line-height:50px;color:#2b2b2b;letter-spacing:-1.8px;-webkit-text-stroke:0.5px #2b2b2b;">5</div>
<div class="r" style="left:936px;top:1704px;width:1364px;height:144px;background:#f8f8f8;"></div>
<div class="r" style="left:2300px;top:1704px;width:536px;height:144px;background:#68b240;"></div>
<div class="r" style="left:2836px;top:1704px;width:536px;height:144px;background:#b3da3e;"></div>
<div class="r" style="left:3372px;top:1704px;width:536px;height:144px;background:#b3da3e;"></div>
<div class="r" style="left:3908px;top:1704px;width:536px;height:144px;background:#b3da3e;"></div>
<div class="r" style="left:4444px;top:1704px;width:544px;height:144px;background:#68b240;"></div>
<div class="r" style="left:936px;top:1848px;width:4052px;height:4px;background:#e5e5e8;"></div>
<svg class="r" style="left:958px;top:1722px;" width="62" height="71" viewBox="0 0 62 71"><defs><linearGradient id="gd" x1="0" x2="1"><stop offset="0" stop-color="#a8a8a8"/><stop offset="0.2" stop-color="#e8e8e8"/><stop offset="0.5" stop-color="#d0d0d0"/><stop offset="0.8" stop-color="#efefef"/><stop offset="1" stop-color="#9a9a9a"/></linearGradient>
<linearGradient id="gt" x1="0" y1="0" x2="1" y2="1"><stop offset="0" stop-color="#f2f2f2"/><stop offset="0.6" stop-color="#d8d8d8"/><stop offset="1" stop-color="#bdbdbd"/></linearGradient></defs>
<path d="M2 16 Q2 2 31 2 Q60 2 60 16 V56 Q60 70 31 70 Q2 70 2 56 Z" fill="url(#gd)"/>
<g fill="none" stroke="#7d7d7d" stroke-width="2.5" opacity="0.8"><path d="M3 27 Q31 42 59 27"/><path d="M3 38 Q31 53 59 38"/><path d="M3 49 Q31 64 59 49"/></g>
<g fill="none" stroke="#fafafa" stroke-width="2"><path d="M3 31 Q31 45 59 31"/><path d="M3 42 Q31 56 59 42"/><path d="M3 53 Q31 67 59 53"/></g>
<ellipse cx="31" cy="16" rx="28" ry="14" fill="url(#gt)" stroke="#b0b0b0" stroke-width="2"/>
<path d="M40 8 L46 10 L38 26 L34 24 Z" fill="#8e8e8e" opacity="0.7"/></svg>
<div class="t" style="left:1036px;top:1726.17px;font-size:50px;line-height:50px;color:#1b8ad0;letter-spacing:-1px;-webkit-text-stroke:0.6px #1b8ad0;">BB.DD. Financiera</div>
<div class="t" style="left:1036px;top:1781.67px;font-size:50px;line-height:50px;color:#1b8ad0;letter-spacing:-1px;-webkit-text-stroke:0.6px #1b8ad0;">(Oracle)</div>
<div class="t" style="left:1572px;top:1726.17px;font-size:50px;line-height:50px;color:#1b8ad0;letter-spacing:-1px;-webkit-text-stroke:0.6px #1b8ad0;">A.05.01</div>
<div class="t" style="left:1776px;top:1726.17px;font-size:50px;line-height:50px;color:#1b8ad0;letter-spacing:-1px;-webkit-text-stroke:0.6px #1b8ad0;">Por personal interno</div>
<div class="t" style="left:2319.0px;width:500px;text-align:center;top:1726.17px;font-size:50px;line-height:50px;color:#2b2b2b;letter-spacing:-1.8px;-webkit-text-stroke:0.5px #2b2b2b;">Muy Baja</div>
<div class="t" style="left:2855.0px;width:500px;text-align:center;top:1726.17px;font-size:50px;line-height:50px;color:#2b2b2b;letter-spacing:-1.8px;-webkit-text-stroke:0.5px #2b2b2b;">0% - 30%</div>
<div class="t" style="left:3391.0px;width:500px;text-align:center;top:1726.17px;font-size:50px;line-height:50px;color:#2b2b2b;letter-spacing:-1.8px;-webkit-text-stroke:0.5px #2b2b2b;">0% - 30%</div>
<div class="t" style="left:3927.0px;width:500px;text-align:center;top:1726.17px;font-size:50px;line-height:50px;color:#2b2b2b;letter-spacing:-1.8px;-webkit-text-stroke:0.5px #2b2b2b;">0% - 30%</div>
<div class="t" style="left:4467.0px;width:500px;text-align:center;top:1726.17px;font-size:50px;line-height:50px;color:#2b2b2b;letter-spacing:-1.8px;-webkit-text-stroke:0.5px #2b2b2b;">0</div>
<div class="r" style="left:936px;top:1852px;width:1364px;height:144px;background:#ffffff;"></div>
<div class="r" style="left:2300px;top:1852px;width:536px;height:144px;background:#68b240;"></div>
<div class="r" style="left:2836px;top:1852px;width:536px;height:144px;background:#b3da3e;"></div>
<div class="r" style="left:3372px;top:1852px;width:536px;height:144px;background:#b3da3e;"></div>
<div class="r" style="left:3908px;top:1852px;width:536px;height:144px;background:#b3da3e;"></div>
<div class="r" style="left:4444px;top:1852px;width:544px;height:144px;background:#68b240;"></div>
<div class="r" style="left:936px;top:1996px;width:4052px;height:4px;background:#e5e5e8;"></div>
<svg class="r" style="left:958px;top:1870px;" width="62" height="71" viewBox="0 0 62 71"><defs><linearGradient id="gd" x1="0" x2="1"><stop offset="0" stop-color="#a8a8a8"/><stop offset="0.2" stop-color="#e8e8e8"/><stop offset="0.5" stop-color="#d0d0d0"/><stop offset="0.8" stop-color="#efefef"/><stop offset="1" stop-color="#9a9a9a"/></linearGradient>
<linearGradient id="gt" x1="0" y1="0" x2="1" y2="1"><stop offset="0" stop-color="#f2f2f2"/><stop offset="0.6" stop-color="#d8d8d8"/><stop offset="1" stop-color="#bdbdbd"/></linearGradient></defs>
<path d="M2 16 Q2 2 31 2 Q60 2 60 16 V56 Q60 70 31 70 Q2 70 2 56 Z" fill="url(#gd)"/>
<g fill="none" stroke="#7d7d7d" stroke-width="2.5" opacity="0.8"><path d="M3 27 Q31 42 59 27"/><path d="M3 38 Q31 53 59 38"/><path d="M3 49 Q31 64 59 49"/></g>
<g fill="none" stroke="#fafafa" stroke-width="2"><path d="M3 31 Q31 45 59 31"/><path d="M3 42 Q31 56 59 42"/><path d="M3 53 Q31 67 59 53"/></g>
<ellipse cx="31" cy="16" rx="28" ry="14" fill="url(#gt)" stroke="#b0b0b0" stroke-width="2"/>
<path d="M40 8 L46 10 L38 26 L34 24 Z" fill="#8e8e8e" opacity="0.7"/></svg>
<div class="t" style="left:1036px;top:1874.17px;font-size:50px;line-height:50px;color:#1b8ad0;letter-spacing:-1px;-webkit-text-stroke:0.6px #1b8ad0;">BB.DD. Financiera</div>
<div class="t" style="left:1036px;top:1929.67px;font-size:50px;line-height:50px;color:#1b8ad0;letter-spacing:-1px;-webkit-text-stroke:0.6px #1b8ad0;">(Oracle)</div>
<div class="t" style="left:1572px;top:1874.17px;font-size:50px;line-height:50px;color:#1b8ad0;letter-spacing:-1px;-webkit-text-stroke:0.6px #1b8ad0;">A.05.03</div>
<div class="t" style="left:1776px;top:1874.17px;font-size:50px;line-height:50px;color:#1b8ad0;letter-spacing:-1px;-webkit-text-stroke:0.6px #1b8ad0;">Por personas externas</div>
<div class="t" style="left:2319.0px;width:500px;text-align:center;top:1874.17px;font-size:50px;line-height:50px;color:#2b2b2b;letter-spacing:-1.8px;-webkit-text-stroke:0.5px #2b2b2b;">Muy Baja</div>
<div class="t" style="left:2855.0px;width:500px;text-align:center;top:1874.17px;font-size:50px;line-height:50px;color:#2b2b2b;letter-spacing:-1.8px;-webkit-text-stroke:0.5px #2b2b2b;">0% - 30%</div>
<div class="t" style="left:3391.0px;width:500px;text-align:center;top:1874.17px;font-size:50px;line-height:50px;color:#2b2b2b;letter-spacing:-1.8px;-webkit-text-stroke:0.5px #2b2b2b;">0% - 30%</div>
<div class="t" style="left:3927.0px;width:500px;text-align:center;top:1874.17px;font-size:50px;line-height:50px;color:#2b2b2b;letter-spacing:-1.8px;-webkit-text-stroke:0.5px #2b2b2b;">0% - 30%</div>
<div class="t" style="left:4467.0px;width:500px;text-align:center;top:1874.17px;font-size:50px;line-height:50px;color:#2b2b2b;letter-spacing:-1.8px;-webkit-text-stroke:0.5px #2b2b2b;">0</div>
<div class="r" style="left:936px;top:2000px;width:1364px;height:144px;background:#f8f8f8;"></div>
<div class="r" style="left:2300px;top:2000px;width:536px;height:144px;background:#68b240;"></div>
<div class="r" style="left:2836px;top:2000px;width:536px;height:144px;background:#b3da3e;"></div>
<div class="r" style="left:3372px;top:2000px;width:536px;height:144px;background:#b3da3e;"></div>
<div class="r" style="left:3908px;top:2000px;width:536px;height:144px;background:#b3da3e;"></div>
<div class="r" style="left:4444px;top:2000px;width:544px;height:144px;background:#68b240;"></div>
<div class="r" style="left:936px;top:2144px;width:4052px;height:4px;background:#e5e5e8;"></div>
<svg class="r" style="left:958px;top:2018px;" width="62" height="71" viewBox="0 0 62 71"><defs><linearGradient id="gd" x1="0" x2="1"><stop offset="0" stop-color="#a8a8a8"/><stop offset="0.2" stop-color="#e8e8e8"/><stop offset="0.5" stop-color="#d0d0d0"/><stop offset="0.8" stop-color="#efefef"/><stop offset="1" stop-color="#9a9a9a"/></linearGradient>
<linearGradient id="gt" x1="0" y1="0" x2="1" y2="1"><stop offset="0" stop-color="#f2f2f2"/><stop offset="0.6" stop-color="#d8d8d8"/><stop offset="1" stop-color="#bdbdbd"/></linearGradient></defs>
<path d="M2 16 Q2 2 31 2 Q60 2 60 16 V56 Q60 70 31 70 Q2 70 2 56 Z" fill="url(#gd)"/>
<g fill="none" stroke="#7d7d7d" stroke-width="2.5" opacity="0.8"><path d="M3 27 Q31 42 59 27"/><path d="M3 38 Q31 53 59 38"/><path d="M3 49 Q31 64 59 49"/></g>
<g fill="none" stroke="#fafafa" stroke-width="2"><path d="M3 31 Q31 45 59 31"/><path d="M3 42 Q31 56 59 42"/><path d="M3 53 Q31 67 59 53"/></g>
<ellipse cx="31" cy="16" rx="28" ry="14" fill="url(#gt)" stroke="#b0b0b0" stroke-width="2"/>
<path d="M40 8 L46 10 L38 26 L34 24 Z" fill="#8e8e8e" opacity="0.7"/></svg>
<div class="t" style="left:1036px;top:2022.17px;font-size:50px;line-height:50px;color:#1b8ad0;letter-spacing:-1px;-webkit-text-stroke:0.6px #1b8ad0;">BB.DD. Financiera</div>
<div class="t" style="left:1036px;top:2077.68px;font-size:50px;line-height:50px;color:#1b8ad0;letter-spacing:-1px;-webkit-text-stroke:0.6px #1b8ad0;">(Oracle)</div>
<div class="t" style="left:1572px;top:2022.17px;font-size:50px;line-height:50px;color:#1b8ad0;letter-spacing:-1px;-webkit-text-stroke:0.6px #1b8ad0;">A.05.02</div>
<div class="t" style="left:1776px;top:2022.17px;font-size:50px;line-height:50px;color:#1b8ad0;letter-spacing:-1px;-webkit-text-stroke:0.6px #1b8ad0;">Por subcontratistas</div>
<div class="t" style="left:2319.0px;width:500px;text-align:center;top:2022.17px;font-size:50px;line-height:50px;color:#2b2b2b;letter-spacing:-1.8px;-webkit-text-stroke:0.5px #2b2b2b;">Muy Baja</div>
<div class="t" style="left:2855.0px;width:500px;text-align:center;top:2022.17px;font-size:50px;line-height:50px;color:#2b2b2b;letter-spacing:-1.8px;-webkit-text-stroke:0.5px #2b2b2b;">0% - 30%</div>
<div class="t" style="left:3391.0px;width:500px;text-align:center;top:2022.17px;font-size:50px;line-height:50px;color:#2b2b2b;letter-spacing:-1.8px;-webkit-text-stroke:0.5px #2b2b2b;">0% - 30%</div>
<div class="t" style="left:3927.0px;width:500px;text-align:center;top:2022.17px;font-size:50px;line-height:50px;color:#2b2b2b;letter-spacing:-1.8px;-webkit-text-stroke:0.5px #2b2b2b;">0% - 30%</div>
<div class="t" style="left:4467.0px;width:500px;text-align:center;top:2022.17px;font-size:50px;line-height:50px;color:#2b2b2b;letter-spacing:-1.8px;-webkit-text-stroke:0.5px #2b2b2b;">0</div>
<div class="r" style="left:936px;top:2148px;width:1364px;height:92px;background:#ffffff;"></div>
<div class="r" style="left:2300px;top:2148px;width:536px;height:92px;background:#fffc3c;"></div>
<div class="r" style="left:2836px;top:2148px;width:536px;height:92px;background:#b3da3e;"></div>
<div class="r" style="left:3372px;top:2148px;width:536px;height:92px;background:#b3da3e;"></div>
<div class="r" style="left:3908px;top:2148px;width:536px;height:92px;background:#b3da3e;"></div>
<div class="r" style="left:4444px;top:2148px;width:544px;height:92px;background:#b3da3e;"></div>
<div class="r" style="left:936px;top:2240px;width:4052px;height:4px;background:#e5e5e8;"></div>
<svg class="r" style="left:948px;top:2168px;" width="80" height="64" viewBox="0 0 80 64"><defs><linearGradient id="gr" x1="0" x2="1"><stop offset="0" stop-color="#8a8a8a"/><stop offset="0.5" stop-color="#e0e0e0"/><stop offset="1" stop-color="#6a6a6a"/></linearGradient></defs>
<path d="M2 38 L46 25 L79 34 L38 50 Z" fill="url(#gr)"/>
<path d="M2 38 L38 50 L39 62 L2 50 Z" fill="#2b2b2b"/>
<path d="M38 50 L79 34 L79 44 L39 62 Z" fill="#4a4a4a"/>
<g fill="#111"><rect x="8" y="42" width="6" height="5"/><rect x="17" y="45" width="6" height="5"/><rect x="26" y="49" width="12" height="4"/></g>
<g fill="#aaa"><rect x="42" y="50" width="4" height="6"/><rect x="58" y="44" width="4" height="6"/></g>
<path d="M52 31 L71 46" stroke="#b07a3a" stroke-width="6" stroke-linecap="round"/>
<ellipse cx="40" cy="25" rx="12" ry="15" fill="#7ec8d8" stroke="#e2b21c" stroke-width="4.5"/>
<path d="M32 18 Q40 10 48 22 L36 34 Z" fill="#a8e6ef" opacity="0.7"/></svg>
<div class="t" style="left:1036px;top:2170.18px;font-size:50px;line-height:50px;color:#1b8ad0;letter-spacing:-1px;-webkit-text-stroke:0.6px #1b8ad0;">Cisco Catalyst 4500E</div>
<div class="t" style="left:1572px;top:2170.18px;font-size:50px;line-height:50px;color:#1b8ad0;letter-spacing:-1px;-webkit-text-stroke:0.6px #1b8ad0;">A.09.02</div>
<div class="t" style="left:1776px;top:2170.18px;font-size:50px;line-height:50px;color:#1b8ad0;letter-spacing:-1px;-webkit-text-stroke:0.6px #1b8ad0;">A beneficio del atacante</div>
<div class="t" style="left:2319.0px;width:500px;text-align:center;top:2170.18px;font-size:50px;line-height:50px;color:#2b2b2b;letter-spacing:-1.8px;-webkit-text-stroke:0.5px #2b2b2b;">Media</div>
<div class="t" style="left:2855.0px;width:500px;text-align:center;top:2170.18px;font-size:50px;line-height:50px;color:#2b2b2b;letter-spacing:-1.8px;-webkit-text-stroke:0.5px #2b2b2b;">0% - 30%</div>
<div class="t" style="left:3391.0px;width:500px;text-align:center;top:2170.18px;font-size:50px;line-height:50px;color:#2b2b2b;letter-spacing:-1.8px;-webkit-text-stroke:0.5px #2b2b2b;">0% - 30%</div>
<div class="t" style="left:3927.0px;width:500px;text-align:center;top:2170.18px;font-size:50px;line-height:50px;color:#2b2b2b;letter-spacing:-1.8px;-webkit-text-stroke:0.5px #2b2b2b;">0% - 30%</div>
<div class="t" style="left:4467.0px;width:500px;text-align:center;top:2170.18px;font-size:50px;line-height:50px;color:#2b2b2b;letter-spacing:-1.8px;-webkit-text-stroke:0.5px #2b2b2b;">2</div>
<svg class="r" style="left:4836px;top:2506px;" width="150" height="156" viewBox="0 0 150 156"><g fill="#9c9d9f"><ellipse cx="74" cy="74" rx="74" ry="68"/><path d="M92 128 Q110 156 138 152 Q118 144 120 120 Z"/></g><path d="M52 52 Q60 40 74 40 Q95 40 95 56 Q95 66 85 73 Q77 79 77 87" fill="none" stroke="#fff" stroke-width="13"/><circle cx="74" cy="107" r="10" fill="#fff"/></svg>
<div class="r" style="left:0px;top:0px;width:5032px;height:175px;background:#202020;"></div>
<div class="r" style="left:4342px;top:0px;width:594px;height:175px;background:#161616;"></div>
<svg class="r" style="left:15px;top:11px;" width="131" height="133" viewBox="0 0 131 133"><defs><linearGradient id="lg" x1="0" y1="0" x2="0" y2="1"><stop offset="0" stop-color="#ec2a80"/><stop offset="1" stop-color="#ad1e60"/></linearGradient></defs><path d="M42 0.5 H89 C121 0.5 130.5 10 130.5 42 V91 C130.5 123 121 132.5 89 132.5 H42 C10 132.5 0.5 123 0.5 91 V42 C0.5 10 10 0.5 42 0.5 Z" fill="url(#lg)"/></svg>
<svg class="r" style="left:48px;top:44px;" width="66" height="66" viewBox="0 0 66 66"><g fill="none" stroke="#fff" stroke-width="4" stroke-linejoin="round" stroke-linecap="round">
<path d="M32.6 3 L59.3 17.5 L59.3 47.8 L32.6 63 L5.4 47.8 L5.4 17.5 Z"/>
<path d="M32.6 3 L32.6 33 L7 47 M32.6 33 L58 47"/>
<path d="M14 20 L20 24 L17 30 M51 20 L45 24 L48 30 M32.6 60 L32.6 47 M27 51 L32.6 46 L38 51"/>
</g></svg>
<div class="t" style="left:162.81px;top:5.42px;font-size:150px;line-height:150px;color:#f5f5f5;transform:scaleX(0.7828);transform-origin:0 0;-webkit-text-stroke:2px #202020;">S</div>
<div class="t" style="left:239.12px;top:5.42px;font-size:150px;line-height:150px;color:#f5f5f5;transform:scaleX(0.7647);transform-origin:0 0;-webkit-text-stroke:2px #202020;">a</div>
<div class="t" style="left:304.73px;top:5.42px;font-size:150px;line-height:150px;color:#f5f5f5;transform:scaleX(1.0164);transform-origin:0 0;-webkit-text-stroke:2px #202020;">n</div>
<div class="t" style="left:380.43px;top:5.42px;font-size:150px;line-height:150px;color:#f5f5f5;transform:scaleX(0.9755);transform-origin:0 0;-webkit-text-stroke:2px #202020;">d</div>
<div class="t" style="left:458.46px;top:5.42px;font-size:150px;line-height:150px;color:#f5f5f5;transform:scaleX(0.7750);transform-origin:0 0;-webkit-text-stroke:2px #202020;">a</div>
<div class="t" style="left:527.44px;top:5.42px;font-size:150px;line-height:150px;color:#f5f5f5;transform:scaleX(0.7922);transform-origin:0 0;-webkit-text-stroke:2px #202020;">S</div>
<div class="t" style="left:625.19px;top:5.42px;font-size:150px;line-height:150px;color:#f5f5f5;transform:scaleX(0.7993);transform-origin:0 0;-webkit-text-stroke:2px #202020;">G</div>
<div class="t" style="left:716.25px;top:5.42px;font-size:150px;line-height:150px;color:#f5f5f5;transform:scaleX(0.7964);transform-origin:0 0;-webkit-text-stroke:2px #202020;">R</div>
<div class="t" style="left:803.27px;top:5.42px;font-size:150px;line-height:150px;color:#f5f5f5;transform:scaleX(0.7176);transform-origin:0 0;-webkit-text-stroke:2px #202020;">C</div>
<div class="t" style="left:1515px;top:17.87px;font-size:35px;line-height:35px;color:#bdbdbd;letter-spacing:-0.6px;">securely powered by</div>
<svg class="r" style="left:1300px;top:40px;" width="130" height="100" viewBox="0 0 130 100"><g fill="#f4f4f4" stroke="#f4f4f4" stroke-width="2" stroke-linejoin="round"><path d="M11 39 L29 15 L35 15 L35 91 L11 91 Z"/><path d="M50 39 L68 15 L74 15 L74 91 L50 91 Z"/><path d="M88 15 L112.5 15 L112.5 40.5 L96 65 L88 65 Z"/></g></svg>
<div class="t" style="left:1434px;top:71.75px;font-size:70px;line-height:70px;color:#f4f4f4;font-weight:bold;letter-spacing:-1.7px;-webkit-text-stroke:1px #202020;">ElevenPaths</div>
<div class="t" style="left:2020px;top:41.90px;font-size:58px;line-height:58px;color:#ffffff;letter-spacing:-1.35px;">[Test] Organización Privada</div>
<div class="t" style="left:2974px;top:41.90px;font-size:58px;line-height:58px;color:#ffffff;letter-spacing:-1.2px;">[DEMO]Servicios de Consultoría</div>
<svg class="r" style="left:4072px;top:67px;" width="65" height="45" viewBox="0 0 65 45"><rect width="65" height="45" fill="#34489a"/>
<path d="M0 0 L65 45 M65 0 L0 45" stroke="#fff" stroke-width="9"/>
<path d="M0 0 L65 45 M65 0 L0 45" stroke="#cf3a4c" stroke-width="3"/>
<path d="M32.5 0 V45 M0 22.5 H65" stroke="#fff" stroke-width="14"/>
<path d="M32.5 0 V45 M0 22.5 H65" stroke="#cf3a4c" stroke-width="8"/></svg>
<div class="t" style="left:4149px;top:62.29px;font-size:54px;line-height:54px;color:#dddddd;letter-spacing:-1.5px;">EN</div>
<svg class="r" style="left:4256px;top:74px;" width="37" height="24" viewBox="0 0 37 24"><path d="M2 2 L18.5 20 L35 2" fill="none" stroke="#888" stroke-width="4"/></svg>
<svg class="r" style="left:4374px;top:27px;" width="117" height="117" viewBox="0 0 117 117"><defs><filter id="blr"><feGaussianBlur stdDeviation="1.5"/></filter></defs><rect width="117" height="117" fill="#ececec"/>
<g filter="url(#blr)">
<path d="M18 117 Q24 92 50 86 L78 86 Q100 92 104 117 Z" fill="#f6f6f6"/>
<path d="M46 76 L72 76 L74 96 Q60 104 48 96 Z" fill="#bdbdbd"/>
<ellipse cx="58" cy="52" rx="22" ry="30" fill="#d2d2d2"/>
<path d="M36 40 Q34 8 62 6 Q90 8 94 36 Q94 56 84 70 Q82 44 74 34 Q60 28 44 34 Q38 40 38 52 Z" fill="#1f1f1f"/>
<ellipse cx="50" cy="58" rx="4" ry="3" fill="#777"/>
</g></svg>
<div class="t" style="left:4508px;top:62.29px;font-size:54px;line-height:54px;color:#ffffff;letter-spacing:-1.5px;">Consultor Test</div>
<svg class="r" style="left:4864px;top:80px;" width="31" height="21" viewBox="0 0 31 21"><path d="M2 2 L15.5 17 L29 2" fill="none" stroke="#888" stroke-width="4"/></svg>
</div></body></html>
